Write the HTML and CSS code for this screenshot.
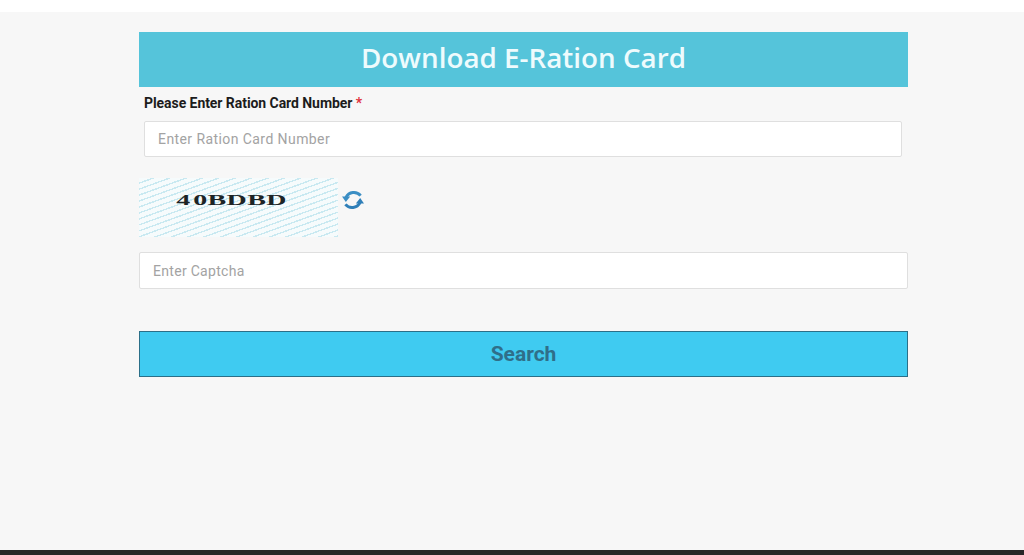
FILE: index.html
```html
<!DOCTYPE html>
<html lang="en">
<head>
<meta charset="utf-8">
<title>Download E-Ration Card</title>
<link rel="stylesheet" href="styles.css">
</head>
<body>
<main class="page">
  <form class="card">
    <h1 class="title">Download E-Ration Card</h1>
    <div class="field">
      <label class="label" for="rc">Please Enter Ration Card Number <span class="req">*</span></label>
      <input class="input input-rc" id="rc" type="text" placeholder="Enter Ration Card Number">
    </div>
    <div class="captcha-row">
      <div class="captcha"><span class="captcha-text"><span class="captcha-first">4</span>0BDBD</span></div>
      <svg class="refresh" viewBox="0 0 24 24" width="24" height="24" aria-hidden="true">
        <path d="M19.6 7.6A8.8 8.8 0 0 0 5 9.4" fill="none" stroke="#3b8ec4" stroke-width="3"/>
        <path d="M1 8.4h8.2L4.8 14Z" fill="#3b8ec4"/>
        <path d="M4.4 16.4A8.8 8.8 0 0 0 19 14.6" fill="none" stroke="#2f7fb8" stroke-width="3"/>
        <path d="M23 15.6h-8.2L19.2 10Z" fill="#2f7fb8"/>
      </svg>
    </div>
    <input class="input input-wide" type="text" placeholder="Enter Captcha">
    <button class="search" type="button">Search</button>
  </form>
</main>
<footer class="bar"></footer>
</body>
</html>
```

FILE: styles.css
```css
* { box-sizing: border-box; }
html, body { margin: 0; height: 100%; }
body {
  display: flex;
  flex-direction: column;
  height: 555px;
  overflow: hidden;
  background: #fff;
  font-family: Roboto, "Liberation Sans", sans-serif;
}
.page {
  flex: 1;
  margin-top: 12px;
  background: #f7f7f7;
  padding: 20px 116px 0 139px;
}
.card { width: 769px; display: flex; flex-direction: column; }
.title {
  margin: 0;
  height: 55px;
  background: #55c4da;
  color: #eefbfd;
  font: 600 27.8px/51px "Open Sans", "Noto Sans", sans-serif;
  text-align: center;
}
.field { padding: 0 6px 0 5px; }
.label {
  display: block;
  height: 34px;
  padding-top: 8px;
  font-size: 14px;
  line-height: 17px;
  font-weight: 700;
  color: #1c1c1c;
  letter-spacing: -0.06px;
}
.req { color: #e0323c; }
.input {
  display: block;
  width: 100%;
  height: 36px;
  padding: 0 13px;
  border: 1px solid #dfdfdf;
  border-radius: 2px;
  background: #fff;
  font: 400 14px Roboto, sans-serif;
  letter-spacing: 0.3px;
  outline: none;
}
.input-rc { letter-spacing: 0.42px; }
.input::placeholder { color: #a3a3a3; opacity: 1; }
.input-wide { height: 37px; margin-top: 15px; }
.captcha-row { display: flex; align-items: flex-start; gap: 3px; margin-top: 21px; }
.captcha {
  width: 199px;
  height: 59px;
  display: flex;
  align-items: center;
  justify-content: center;
  padding: 0 14px 13px 0;
  background: repeating-linear-gradient(160deg, #f6fbfc 0, #f6fbfc 4.2px, #c9e9f1 4.2px, #c9e9f1 5.6px);
}
.captcha-text {
  font: 700 14px "Liberation Serif", "DejaVu Serif", serif;
  color: #1d2426;
  letter-spacing: 0.2px;
  transform: scaleX(2);
}
.captcha-first { margin-right: 1.2px; }
.refresh { flex: none; margin-top: 10px; }
.search {
  margin-top: 42px;
  height: 46px;
  padding: 0 0 1px;
  background: #3fcbf1;
  border: 1.5px solid #2b6f88;
  border-radius: 0;
  color: #2f6f89;
  font: 700 21px Roboto, sans-serif;
}
.bar { flex: none; height: 5px; background: #262626; }
```
